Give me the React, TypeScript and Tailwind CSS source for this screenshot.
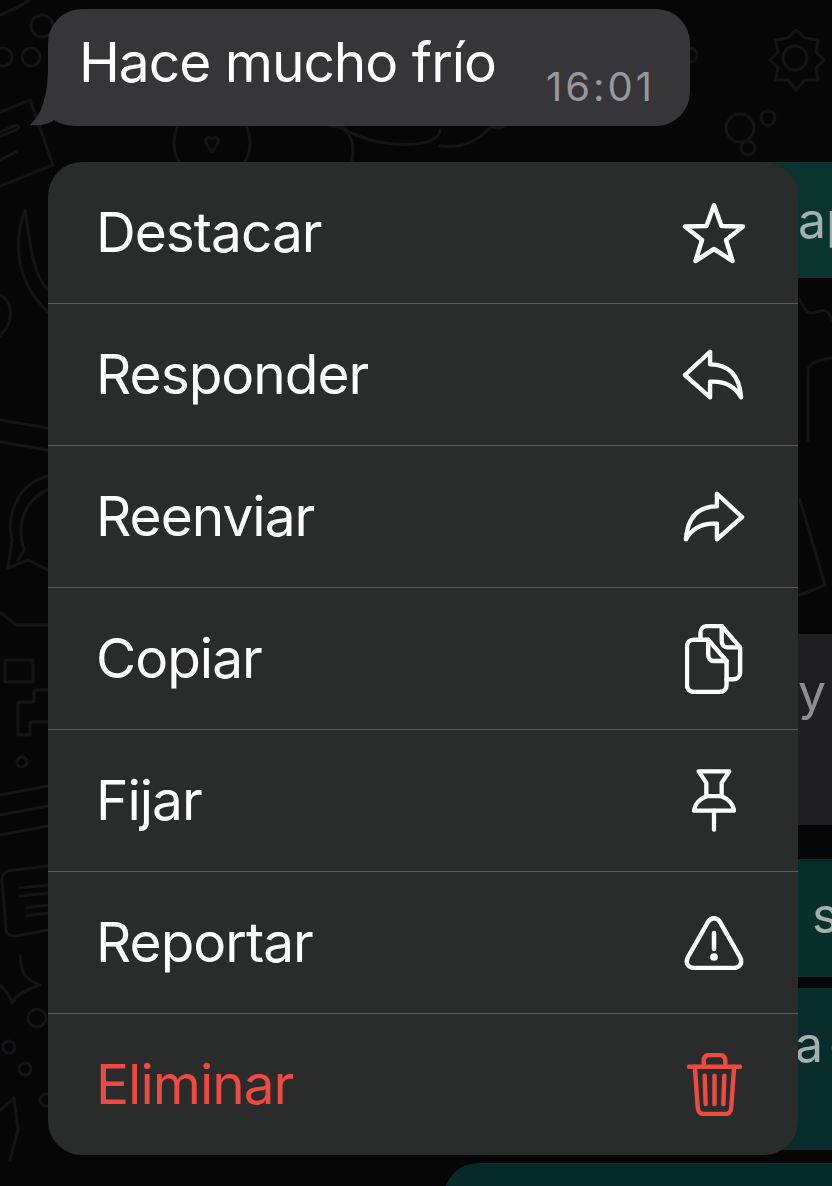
import React from "react";

const font = { fontFamily: "Inter, 'Liberation Sans', sans-serif" };

const Star = () => (
  <svg width="64" height="62" viewBox="0 0 64 62" fill="none" stroke="white" strokeWidth="4.5" strokeLinejoin="round" strokeLinecap="round">
    <path d="M32 3 L39.5 24 L61 24.5 L44 38 L50.5 59 L32 47 L13.5 59 L20 38 L3 24.5 L24.5 24 Z" />
  </svg>
);
const Reply = () => (
  <svg className="mr-[3px]" width="62" height="52" viewBox="0 0 64 52" fill="none" stroke="white" strokeWidth="4.5" strokeLinejoin="round" strokeLinecap="round">
    <path d="M3 26 L29 2 L29 15 C46 15 59 24 61 49 C54 37 43 32 29 33 L29 49 Z" />
  </svg>
);
const Forward = () => (
  <svg width="62" height="52" viewBox="0 0 64 52" fill="none" stroke="white" strokeWidth="4.5" strokeLinejoin="round" strokeLinecap="round">
    <path d="M61 26 L35 2 L35 15 C18 15 5 24 3 49 C10 37 21 32 35 33 L35 49 Z" />
  </svg>
);
const Copy = () => (
  <svg width="58" height="70" viewBox="0 0 60 72" fill="none" stroke="white" strokeWidth="4.6" strokeLinejoin="round" strokeLinecap="round">
    <path d="M16 16 V9 C16 5 19 2 23 2 H38 L57 24 V50 C57 54 54 57 50 57 H43" />
    <path d="M38 2 V17 C38 21 40 24 44 24 H57" />
    <path d="M9 16 H24 L43 38 V63 C43 67 40 70 36 70 H9 C5 70 2 67 2 63 V23 C2 19 5 16 9 16 Z" />
    <path d="M24 16 V31 C24 35 26 38 30 38 H43" />
  </svg>
);
const Pin = () => (
  <svg width="44" height="64" viewBox="0 0 46 66" fill="none" stroke="white" strokeWidth="4.5" strokeLinejoin="round" strokeLinecap="round">
    <path d="M7 2 H39 L31 14 V28 C38 31 43 36 44 43 H2 C3 36 8 31 15 28 V14 Z" />
    <path d="M15 28 H31" />
    <path d="M23 43 V63" />
  </svg>
);
const Warn = () => (
  <svg width="60" height="54" viewBox="0 0 60 54" fill="none" stroke="white" strokeWidth="4.5" strokeLinejoin="round" strokeLinecap="round">
    <path d="M24 6 C27 1 33 1 36 6 L56 41 C59 47 56 52 50 52 H10 C4 52 1 47 4 41 Z" />
    <path d="M30 17 V33" />
    <circle cx="30" cy="41" r="1.6" fill="white" />
  </svg>
);
const Trash = () => (
  <svg width="55" height="63" viewBox="0 0 56 64" fill="none" stroke="#ef4a41" strokeWidth="4.5" strokeLinejoin="round" strokeLinecap="round">
    <path d="M2 14 H54" />
    <path d="M17 13 V8 C17 4 19 2 23 2 H33 C37 2 39 4 39 8 V13" />
    <path d="M8 14 L11 56 C11 60 14 62 17 62 H39 C42 62 45 60 45 56 L48 14" />
    <path d="M18 23 L19 52 M28 23 V52 M38 23 L37 52" />
  </svg>
);

const items: { label: string; icon: React.ReactNode; red?: boolean }[] = [
  { label: "Destacar", icon: <Star /> },
  { label: "Responder", icon: <Reply /> },
  { label: "Reenviar", icon: <Forward /> },
  { label: "Copiar", icon: <Copy /> },
  { label: "Fijar", icon: <Pin /> },
  { label: "Reportar", icon: <Warn /> },
  { label: "Eliminar", icon: <Trash />, red: true },
];

const Doodles = () => (
  <svg className="absolute inset-0" width="832" height="1186" viewBox="0 0 832 1186" fill="none" stroke="#141416" strokeWidth="3" strokeLinecap="round" strokeLinejoin="round">
    <circle cx="42" cy="26" r="11" />
    <circle cx="3" cy="57" r="9" />
    <circle cx="31" cy="57" r="9" />
    <path d="M0 112 L30 100 L53 165 L0 186" />
    <path d="M0 136 L16 130 C20 128 20 124 14 126 L0 132 M0 160 L16 152" />
    <path d="M0 15 C12 10 22 5 30 0" />
    <circle cx="212" cy="143" r="38" />
    <path d="M212 152 C203 142 205 134 212 139 C219 134 221 142 212 152 Z" />
    <path d="M330 126 C345 125 356 136 352 160" />
    <path d="M340 126 C372 150 440 150 440 130" />
    <path d="M440 146 C470 150 490 135 510 100 C522 80 530 60 512 45" />
    <circle cx="498" cy="118" r="10" />
    <circle cx="472" cy="82" r="8" />
    <circle cx="690" cy="55" r="7" />
    <circle cx="472" cy="55" r="5" />
    <circle cx="795" cy="58" r="12" />
    <path d="M770 60 L778 52 L775 40 L788 38 L796 30 L805 38 L818 40 L816 52 L824 60 L816 68 L818 80 L805 80 L796 90 L788 80 L775 80 L778 68 Z" />
    <circle cx="740" cy="128" r="14" />
    <circle cx="768" cy="118" r="7" />
    <circle cx="748" cy="148" r="7" />
    <path d="M25 210 C14 240 14 280 48 312 M25 210 C30 236 30 270 48 290" />
    <path d="M0 295 C12 300 16 320 0 336" />
    <path d="M0 420 L48 428 M0 442 L48 450" />
    <path d="M48 476 C22 482 5 510 12 540 L8 568 L28 560 L48 570 M48 490 C30 496 14 520 24 550 L18 560" />
    <path d="M5 660 H33 V682 H5 Z" />
    <path d="M0 612 L16 625 H48" />
    <path d="M18 702 V735 H30 V722 H48 M18 702 H34 V690 H48" />
    <circle cx="22" cy="762" r="5" />
    <path d="M0 795 L48 786 M0 815 L48 806 M0 835 L48 826" />
    <path d="M2 880 C2 872 8 870 14 870 L48 866 M2 880 L6 930 C6 935 10 936 16 936 L48 930" />
    <path d="M20 888 L48 885 M20 896 L48 893 M26 908 L48 905 M26 916 L48 913" />
    <path d="M20 956 C22 975 24 978 40 985 C24 990 16 995 12 1003 C10 995 5 990 0 985" />
    <circle cx="37" cy="1018" r="9" />
    <circle cx="9" cy="1047" r="6" />
    <circle cx="25" cy="1069" r="6" />
    <circle cx="46" cy="1100" r="6" />
    <path d="M0 1110 L14 1098 L18 1130 L10 1160" />
    <path d="M800 300 C812 330 822 295 832 320" />
    <path d="M808 370 C808 365 815 360 832 358 M808 370 V440" />
    <path d="M800 500 L825 585 L800 595" />
  </svg>
);

export default function App() {
  return (
    <div className="relative w-[832px] h-[1186px] overflow-hidden bg-[#060607]" style={font}>
      <Doodles />

      {/* conversation bubbles behind the menu, stacked in flow */}
      <div className="absolute inset-0 flex flex-col items-end pt-[162px] text-[50px] whitespace-nowrap">
        <div className="shrink-0 w-[132px] h-[116px] bg-[#0a352f] text-[#a4b0ae] leading-[116px] pl-[98px]">ap</div>
        <div className="shrink-0 w-[132px] h-[191px] mt-[356px] bg-[#1f1f21] text-[#8e8e90] leading-[116px] pl-[98px]">y</div>
        <div className="shrink-0 w-[132px] h-[118px] mt-[34px] bg-[#08302b] text-[#a4b0ae] leading-[112px] pl-[112px]">s</div>
        <div className="shrink-0 w-[132px] h-[162px] mt-[11px] bg-[#062d29] text-[#a4b0ae] leading-[112px] pl-[95px] [word-spacing:-8px]">a e</div>
        <div className="shrink-0 w-[388px] h-[80px] mt-[13px] rounded-l-[34px] bg-[#052a27]" />
      </div>

      <div className="relative flex flex-col items-start pl-[48px] pt-[9px]">
        <div className="relative w-[642px] h-[117px] rounded-[34px] bg-[#363638] flex items-start justify-between pl-[31px] pr-[35px]">
          <svg className="absolute left-[-18px] bottom-0" width="50" height="60" viewBox="0 0 50 60" fill="#363638">
            <path d="M18 0 C18 30 12 48 0 59 C10 60 20 58 24 54 C30 58 38 60 50 60 L50 0 Z" />
          </svg>
          <span className="relative mt-[19px] text-[55px] leading-[68px] text-white tracking-[-1px] whitespace-nowrap">Hace mucho frío</span>
          <span className="relative mt-[54px] text-[40px] leading-[48px] tracking-[3px] text-[#98989c]">16:01</span>
        </div>

        <div className="relative mt-[36px] w-[750px] rounded-[34px] bg-[#2a2b2b] overflow-hidden">
          {items.map((it, i) => (
            <div
              key={it.label}
              className={`flex items-center justify-between pl-[48px] ${i < items.length - 1 ? "h-[142px] border-b border-[#5a5b5b]" : "h-[141px]"}`}
            >
              <span className={`pb-[2px] text-[55px] leading-[60px] tracking-[-1px] ${it.red ? "text-[#ef4a41]" : "text-white"}`}>{it.label}</span>
              <span className="w-[130px] flex justify-center mr-[19px]">{it.icon}</span>
            </div>
          ))}
        </div>
      </div>
    </div>
  );
}
